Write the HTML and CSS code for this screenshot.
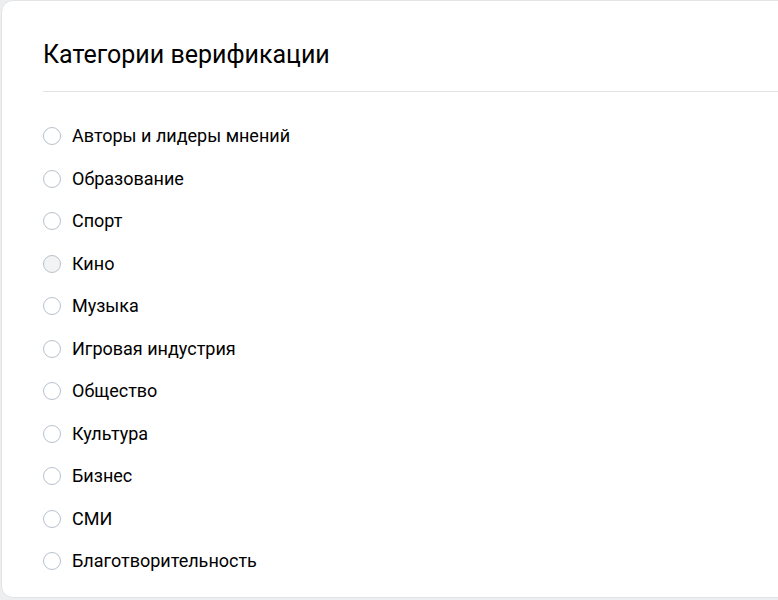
FILE: index.html
```html
<!DOCTYPE html>
<html lang="ru">
<head>
<meta charset="utf-8">
<link rel="stylesheet" href="styles.css">
</head>
<body>
<div class="card">
  <h1 class="title">Категории верификации</h1>
  <div class="divider"></div>
  <ul class="list">
    <li class="item"><span class="radio"></span><span class="label">Авторы и лидеры мнений</span></li>
    <li class="item"><span class="radio"></span><span class="label">Образование</span></li>
    <li class="item"><span class="radio"></span><span class="label">Спорт</span></li>
    <li class="item"><span class="radio radio-hover"></span><span class="label">Кино</span></li>
    <li class="item"><span class="radio"></span><span class="label">Музыка</span></li>
    <li class="item"><span class="radio"></span><span class="label">Игровая индустрия</span></li>
    <li class="item"><span class="radio"></span><span class="label">Общество</span></li>
    <li class="item"><span class="radio"></span><span class="label">Культура</span></li>
    <li class="item"><span class="radio"></span><span class="label">Бизнес</span></li>
    <li class="item"><span class="radio"></span><span class="label">СМИ</span></li>
    <li class="item"><span class="radio"></span><span class="label">Благотворительность</span></li>
  </ul>
</div>
</body>
</html>
```
FILE: styles.css
```css
html, body {
  margin: 0;
  padding: 0;
  height: 100%;
  overflow: hidden;
}
body {
  background: #edeef0;
  font-family: Roboto, "Liberation Sans", sans-serif;
  color: #000;
}
.card {
  box-sizing: border-box;
  margin: 0 0 0 1px;
  width: 800px;
  height: 598px;
  background: #fff;
  border: 1px solid #e3e4e8;
  border-radius: 12px;
  padding: 0 0 0 41px;
}
.title {
  margin: 0;
  padding-top: 38px;
  font-size: 25px;
  font-weight: 400;
  line-height: 32px;
  height: 52px;
  color: #000;
}
.divider {
  height: 1px;
  background: #e1e3e6;
}
.list {
  list-style: none;
  margin: 0;
  padding: 23px 0 0 0;
}
.item {
  display: flex;
  align-items: center;
  height: 42.5px;
}
.radio {
  box-sizing: border-box;
  width: 18px;
  height: 18px;
  border: 1.5px solid #b8c1cc;
  border-radius: 50%;
  margin-right: 11px;
  flex: none;
}
.radio-hover {
  background: #f2f3f5;
}
.label {
  font-size: 18px;
  line-height: 22px;
}
```
